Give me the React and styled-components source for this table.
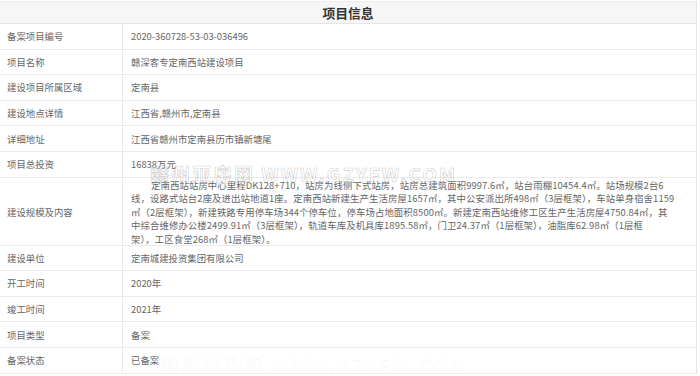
import React from "react";
import styled, { createGlobalStyle } from "styled-components";

const Global = createGlobalStyle`
  html, body { margin: 0; padding: 0; background: #fff; }
  body { font-family: "Noto Sans CJK SC", "Microsoft YaHei", sans-serif; }
`;

const Page = styled.div`
  position: relative;
  width: 700px;
  height: 376px;
  overflow: hidden;
  padding-top: 1px;
  box-sizing: border-box;
`;

const Table = styled.div`
  width: 697px;
  border-right: 1px solid #e4e4e4;
  box-sizing: border-box;
`;

const TitleBar = styled.div`
  height: 23px;
  box-sizing: border-box;
  border-top: 1px solid #ececec;
  border-bottom: 1px solid #e6e6e6;
  background: #f6f6f6;
  display: flex;
  align-items: center;
  justify-content: center;
  font-size: 12.8px;
  font-weight: 700;
  color: #333;
`;

const Row = styled.div`
  display: grid;
  grid-template-columns: 123px 1fr;
  height: ${(p) => (p.$tall ? "68px" : "25.6px")};
  box-sizing: border-box;
  border-bottom: 1px solid #ebebeb;
  font-size: 9.4px;
  color: #666;
`;

const Label = styled.div`
  display: flex;
  align-items: center;
  padding-left: 7px;
  border-right: 1px solid #e8e8e8;
  white-space: nowrap;
`;

const Value = styled.div`
  display: flex;
  align-items: center;
  padding-left: 8px;
  white-space: nowrap;
`;

const Paragraph = styled.div`
  padding-left: 8px;
  padding-top: 1px;
  line-height: 13.5px;
  white-space: nowrap;
  letter-spacing: 0.1px;
`;

const Line = styled.span`
  display: block;
  text-indent: ${(p) => (p.$indent ? "20px" : "0")};
`;

const Watermark = styled.div`
  position: absolute;
  left: ${(p) => p.$x}px;
  top: ${(p) => p.$y}px;
  font-family: "Noto Sans CJK SC", "DejaVu Sans", sans-serif;
  font-size: 19px;
  font-weight: 700;
  letter-spacing: 2px;
  color: rgba(255, 255, 255, 0.25);
  -webkit-text-stroke: 0.6px rgba(130, 130, 130, ${(p) => p.$alpha});
  white-space: nowrap;
  pointer-events: none;
`;

const rows = [
  ["备案项目编号", "2020-360728-53-03-036496"],
  ["项目名称", "赣深客专定南西站建设项目"],
  ["建设项目所属区域", "定南县"],
  ["建设地点详情", "江西省,赣州市,定南县"],
  ["详细地址", "江西省赣州市定南县历市镇新塘尾"],
  ["项目总投资", "16838万元"],
];

const rows2 = [
  ["建设单位", "定南城建投资集团有限公司"],
  ["开工时间", "2020年"],
  ["竣工时间", "2021年"],
  ["项目类型", "备案"],
  ["备案状态", "已备案"],
];

const paragraph = [
  "定南西站站房中心里程DK128+710，站房为线侧下式站房，站房总建筑面积9997.6㎡，站台雨棚10454.4㎡。站场规模2台6",
  "线，设路式站台2座及进出站地道1座。定南西站新建生产生活房屋1657㎡，其中公安派出所498㎡（3层框架），车站单身宿舍1159",
  "㎡（2层框架），新建铁路专用停车场344个停车位，停车场占地面积8500㎡。新建定南西站维修工区生产生活房屋4750.84㎡，其",
  "中综合维修办公楼2499.91㎡（3层框架），轨道车库及机具库1895.58㎡，门卫24.37㎡（1层框架），油脂库62.98㎡（1层框",
  "架），工区食堂268㎡（1层框架）。",
];

export default function App() {
  return (
    <>
      <Global />
      <Page>
        <Table>
          <TitleBar>项目信息</TitleBar>
          {rows.map(([k, v]) => (
            <Row key={k}>
              <Label>{k}</Label>
              <Value>{v}</Value>
            </Row>
          ))}
          <Row $tall>
            <Label>建设规模及内容</Label>
            <Paragraph>
              {paragraph.map((l, i) => (
                <Line key={i} $indent={i === 0}>
                  {l}
                </Line>
              ))}
            </Paragraph>
          </Row>
          {rows2.map(([k, v]) => (
            <Row key={k}>
              <Label>{k}</Label>
              <Value>{v}</Value>
            </Row>
          ))}
        </Table>
        <Watermark $x={150} $y={160} $alpha={0.4}>赣州亚房网 WWW.GZYFW.COM</Watermark>
        <Watermark $x={160} $y={350} $alpha={0.08}>赣州亚房网 WWW.GZYFW.COM</Watermark>
      </Page>
    </>
  );
}
